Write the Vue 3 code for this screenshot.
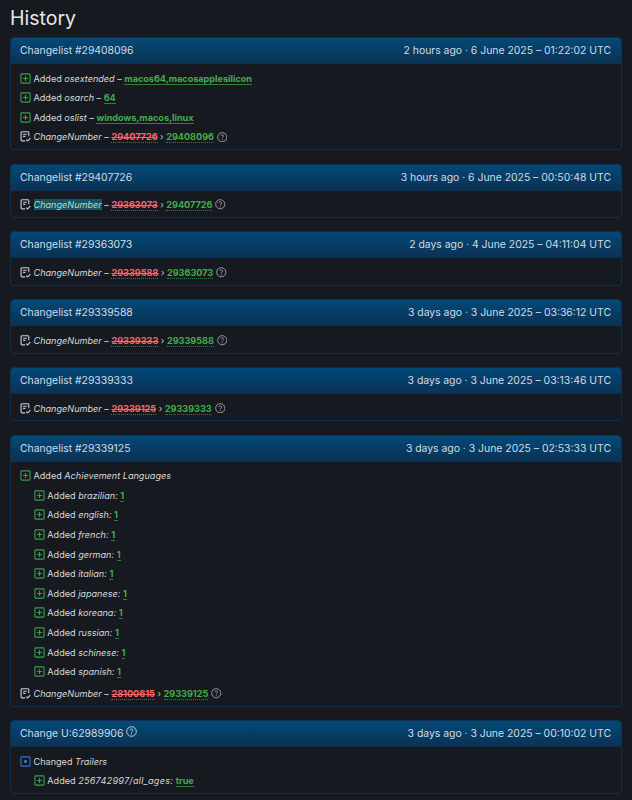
<script setup>
const ch = (id, time, from, to, hl = false) => ({ id: 'Changelist #' + id, time, rows: [{ t: 'cn', from, to, hl }] })
const lang = ['brazilian','english','french','german','italian','japanese','koreana','russian','schinese','spanish']
const cards = [
  { id: 'Changelist #29408096', time: '2 hours ago · 6 June 2025 – 01:22:02 UTC', rows: [
    { t: 'add', key: 'osextended', val: 'macos64,macosapplesilicon' },
    { t: 'add', key: 'osarch', val: '64' },
    { t: 'add', key: 'oslist', val: 'windows,macos,linux' },
    { t: 'cn', from: '29407726', to: '29408096' } ] },
  ch('29407726', '3 hours ago · 6 June 2025 – 00:50:48 UTC', '29363073', '29407726', true),
  ch('29363073', '2 days ago · 4 June 2025 – 04:11:04 UTC', '29339588', '29363073'),
  ch('29339588', '3 days ago · 3 June 2025 – 03:36:12 UTC', '29339333', '29339588'),
  ch('29339333', '3 days ago · 3 June 2025 – 03:13:46 UTC', '29339125', '29339333'),
  { id: 'Changelist #29339125', time: '3 days ago · 3 June 2025 – 02:53:33 UTC', rows: [
    { t: 'head', key: 'Achievement Languages' },
    ...lang.map(l => ({ t: 'sub', key: l, val: '1' })),
    { t: 'cn', gap: true, from: '28100615', to: '29339125' } ] },
  { id: 'Change U:62989906', help: true, time: '3 days ago · 3 June 2025 – 00:10:02 UTC', rows: [
    { t: 'chg', key: 'Trailers' },
    { t: 'sub', key: '256742997/all_ages', val: 'true', wide: true } ] }
]
</script>

<template>
  <main class="page">
    <h1 class="title">History</h1>
    <section v-for="c in cards" :key="c.id" class="card">
      <header class="head">
        <span class="name">{{ c.id }}
          <svg v-if="c.help" class="help big" viewBox="0 0 16 16"><circle cx="8" cy="8" r="7" /><path d="M6 6.2a2 2 0 1 1 3 1.8c-.7.4-1 .8-1 1.6" /><circle class="dot" cx="8" cy="11.8" r=".9" /></svg>
        </span>
        <span class="time">{{ c.time }}</span>
      </header>
      <div class="body">
        <div v-for="(r, i) in c.rows" :key="i" class="row" :class="{ sub: r.t === 'sub', gap: r.gap }">
          <template v-if="r.t === 'cn'">
            <svg class="ico doc" viewBox="0 0 12 12"><path d="M5.6 10.8H2.2a1 1 0 0 1-1-1V1.8a1 1 0 0 1 1-1h6.4a1 1 0 0 1 1 1v4" /><path d="M3.4 3.6h4M3.4 5.8h2.6" /><path d="M6.8 9.4l1.5 1.5 3-3.2" /></svg>
            <span class="txt"><i :class="{ hl: r.hl }">ChangeNumber</i> – <span class="old">{{ r.from }}</span> <span class="gt">›</span> <span class="new">{{ r.to }}</span></span>
            <svg class="help" viewBox="0 0 16 16"><circle cx="8" cy="8" r="7" /><path d="M6 6.2a2 2 0 1 1 3 1.8c-.7.4-1 .8-1 1.6" /><circle class="dot" cx="8" cy="11.8" r=".9" /></svg>
          </template>
          <template v-else-if="r.t === 'chg'">
            <svg class="ico blue" viewBox="0 0 12 12"><rect x="1" y="1" width="10" height="10" rx="1" /><rect class="sq" x="4.7" y="4.7" width="2.6" height="2.6" /></svg>
            <span class="txt">Changed <i>{{ r.key }}</i></span>
          </template>
          <template v-else>
            <svg class="ico plus" viewBox="0 0 12 12"><rect x="1" y="1" width="10" height="10" rx="1" /><path d="M6 3.2v5.6M3.2 6h5.6" /></svg>
            <span v-if="r.t === 'head'" class="txt">Added <i>{{ r.key }}</i></span>
            <span v-else-if="r.t === 'add'" class="txt">Added <i>{{ r.key }}</i> – <b class="val">{{ r.val }}</b></span>
            <span v-else class="txt">Added <i :class="{ wide: r.wide }">{{ r.key }}:</i> <b class="val">{{ r.val }}</b></span>
          </template>
        </div>
      </div>
    </section>
  </main>
</template>

<style scoped>
.page { width: 632px; height: 800px; overflow: hidden; box-sizing: border-box; padding: 0 10px 0 9.5px; background: #16191f; font-family: Inter, "Noto Sans", sans-serif; color: #d4d8dd; }
.title { margin: 0; padding-top: 6px; height: 31px; box-sizing: content-box; padding-left: .5px; font-size: 19.5px; line-height: 25px; font-weight: 400; color: #e6e8eb; }
.card { margin-bottom: 13.2px; border: 1px solid #0f2f4c; border-radius: 4px; overflow: hidden; }
.head { box-sizing: border-box; display: flex; justify-content: space-between; align-items: center; height: 27px; margin: -1px -1px 0; padding: 0 11px 0 10.5px; background: linear-gradient(180deg, #014a7a, #0b3152); font-size: 10.4px; color: #d3dbe3; }
.name { display: flex; align-items: center; gap: 3px; }
.body { padding: 4.4px 10px 2.6px 9.5px; }
.row { display: flex; align-items: center; height: 19.6px; font-size: 9.1px; color: #d6d8db; }
.row.sub { padding-left: 13.8px; }
.row.gap { margin-top: 2px; }
.ico { width: 11px; height: 11px; margin-right: 2.5px; flex: none; fill: none; stroke-width: 1.25; }
.plus { stroke: #3a9e44; }
.blue { stroke: #2a78c8; }
.blue .sq { fill: #4a9be8; stroke: none; }
.doc { stroke: #c8cbcf; }
.txt { white-space: pre-wrap; }
.txt i { font-style: italic; }
.wide { letter-spacing: .25px; }
.hl { background: #12575f; color: #b8d4d8; }
.val { font-weight: 700; color: #44ac4c; border-bottom: 1px solid #2f7f37; }
.old { font-weight: 700; color: #f96464; text-decoration: line-through; border-bottom: 1px dotted #a04a4a; }
.new { font-weight: 700; color: #44ac4c; border-bottom: 1px dotted #2f7f37; }
.gt { color: #c5c8cc; }
.help { width: 10.5px; height: 10.5px; margin-left: 3px; fill: none; stroke: #a8acb0; stroke-width: 1.3; flex: none; }
.help.big { width: 11px; height: 11px; margin: 0 0 3px 0; stroke: #d3dbe3; }
.help .dot { fill: #a8acb0; stroke: none; }
.help.big .dot { fill: #d3dbe3; }
</style>

<style>
html, body { background: #16191f; }
</style>
